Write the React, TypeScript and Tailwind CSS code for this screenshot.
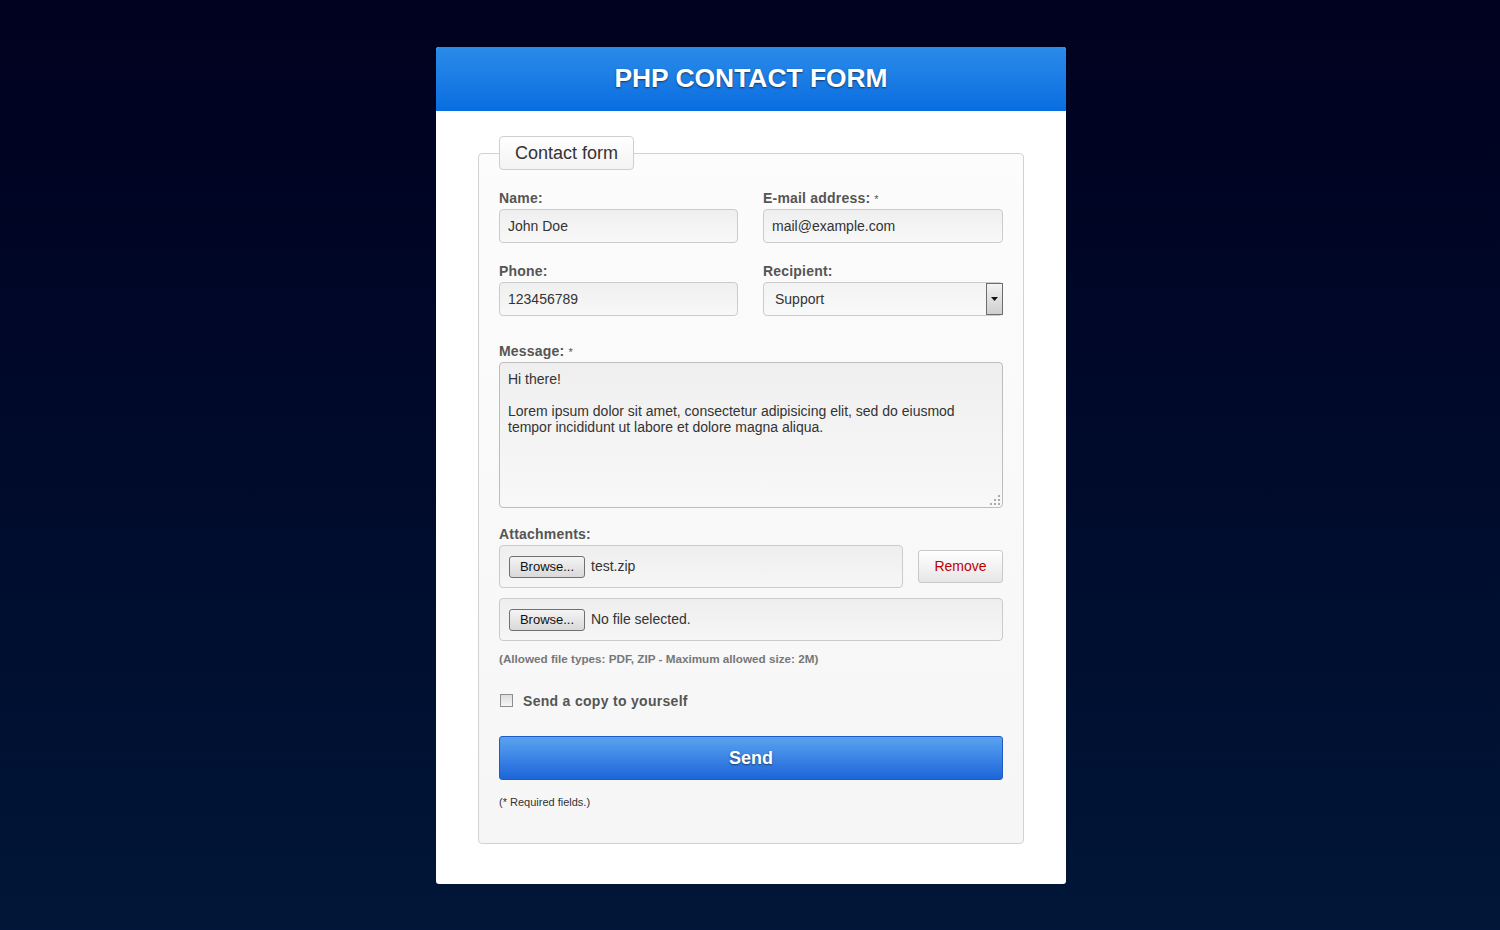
import React from "react";

const font = { fontFamily: '"Liberation Sans", Arial, sans-serif' };

function Label({ children, required }: { children: React.ReactNode; required?: boolean }) {
  return (
    <label className="mb-[3px] block h-4 text-[14px] leading-4 font-bold tracking-[0.2px] text-[#555]">
      {children}
      {required && <span className="ml-1 text-[11px] font-normal text-[#555]">*</span>}
    </label>
  );
}

function TextField({ value }: { value: string }) {
  return (
    <input
      readOnly
      defaultValue={value}
      className="block h-[34px] w-full rounded-[4px] border border-[#cbcbcb] bg-linear-to-b from-[#efefef] to-[#f8f8f8] px-2 text-[14px] text-[#333] outline-none"
    />
  );
}

function BrowseButton() {
  return (
    <button
      type="button"
      className="h-[22px] w-[76px] shrink-0 rounded-[3px] border border-[#707070] bg-linear-to-b from-[#f4f4f4] to-[#d9d9d9] text-[13px] leading-none text-[#111]"
    >
      Browse...
    </button>
  );
}

function FileRow({ name }: { name: string }) {
  return (
    <div className="flex h-[43px] flex-1 items-center gap-[6px] rounded-[4px] border border-[#cbcbcb] bg-linear-to-b from-[#eeeeee] to-[#f6f6f6] pl-[9px]">
      <BrowseButton />
      <span className="text-[14px] text-[#333]">{name}</span>
    </div>
  );
}

export default function App() {
  return (
    <div style={font} className="min-h-screen bg-linear-to-b from-[#00021f] to-[#011638] pt-[47px] pb-[46px] pl-[2px]">
      <div className="mx-auto w-[630px] overflow-hidden rounded-[3px] bg-white">
        <div className="flex h-16 items-center justify-center bg-linear-to-b from-[#2b8be9] to-[#076de0]">
          <h1 className="text-[26.4px] font-bold text-white [text-shadow:0_1px_2px_rgba(0,0,0,0.55)]">
            PHP CONTACT FORM
          </h1>
        </div>

        <div className="px-[42px] pt-[25px] pb-10">
          <fieldset className="rounded-[4px] border border-[#d2d2d2] bg-linear-to-b from-[#fcfcfc] to-[#f6f6f6] px-5 pt-5 pb-[34px]">
            <legend className="h-[34px] rounded-[4px] border border-[#cfcfcf] bg-linear-to-b from-white to-[#f3f3f3] px-[15px] text-[18px] leading-[32px] text-[#333]">
              Contact form
            </legend>

            <div className="grid grid-cols-[239px_240px] gap-x-[25px]">
              <div>
                <Label>Name:</Label>
                <TextField value="John Doe" />
              </div>
              <div>
                <Label required>E-mail address:</Label>
                <TextField value="mail@example.com" />
              </div>
              <div className="mt-5">
                <Label>Phone:</Label>
                <TextField value="123456789" />
              </div>
              <div className="mt-5">
                <Label>Recipient:</Label>
                <div className="relative h-[34px] rounded-[4px] border border-[#cbcbcb] bg-linear-to-b from-[#f3f3f3] to-[#f9f9f9]">
                  <select
                    defaultValue="Support"
                    className="h-full w-full appearance-none bg-transparent pl-[11px] text-[14px] text-[#333] outline-none"
                  >
                    <option>Support</option>
                    <option>Sales</option>
                  </select>
                  <div className="pointer-events-none absolute top-0 -right-px flex h-[32px] w-[17px] items-center justify-center border border-[#6d6d6d] bg-linear-to-b from-[#f2f2f2] to-[#cfcfcf]">
                    <svg width="7" height="4" viewBox="0 0 7 4">
                      <path d="M0 0h7L3.5 4z" fill="#111" />
                    </svg>
                  </div>
                </div>
              </div>
            </div>

            <div className="mt-[27px]">
              <Label required>Message:</Label>
              <div className="relative">
                <textarea
                  readOnly
                  defaultValue={
                    "Hi there!\n\nLorem ipsum dolor sit amet, consectetur adipisicing elit, sed do eiusmod tempor incididunt ut labore et dolore magna aliqua."
                  }
                  className="block h-[146px] w-full resize-none rounded-[4px] border border-[#bdbdbd] bg-linear-to-b from-[#efefef] to-[#f8f8f8] px-2 py-[8px] text-[14px] leading-4 text-[#333] outline-none"
                />
                <svg className="absolute right-[3px] bottom-[3px]" width="10" height="10" viewBox="0 0 10 10">
                  <g fill="#aaa">
                    <rect x="8" y="0" width="2" height="2" />
                    <rect x="4" y="4" width="2" height="2" />
                    <rect x="8" y="4" width="2" height="2" />
                    <rect x="0" y="8" width="2" height="2" />
                    <rect x="4" y="8" width="2" height="2" />
                    <rect x="8" y="8" width="2" height="2" />
                  </g>
                </svg>
              </div>
            </div>

            <div className="mt-[18px]">
              <Label>Attachments:</Label>
              <div className="flex items-center gap-[15px]">
                <FileRow name="test.zip" />
                <button
                  type="button"
                  className="h-[33px] w-[85px] shrink-0 rounded-[3px] border border-[#c8c8c8] bg-linear-to-b from-white to-[#e6e6e6] text-[14px] text-[#c00000]"
                >
                  Remove
                </button>
              </div>
              <div className="mt-[10px] flex">
                <FileRow name="No file selected." />
              </div>
            </div>

            <p className="mt-[11px] text-[11.7px] leading-[14px] font-bold text-[#777]">
              (Allowed file types: PDF, ZIP - Maximum allowed size: 2M)
            </p>

            <label className="mt-[26px] flex h-[18px] items-center gap-[10px]">
              <input
                type="checkbox"
                className="ml-px h-[13px] w-[13px] -translate-y-[1px] appearance-none border border-[#8e8e8e] bg-linear-to-b from-[#dcdcdc] to-[#f6f6f6]"
              />
              <span className="text-[14px] font-bold tracking-[0.3px] text-[#555]">Send a copy to yourself</span>
            </label>

            <button
              type="button"
              className="mt-[26px] block h-[44px] w-full rounded-[3px] border border-[#1c5cc4] bg-linear-to-b from-[#5aa2ef] to-[#1d65d9] text-[18px] font-bold text-white [text-shadow:0_1px_2px_rgba(0,0,0,0.5)]"
            >
              Send
            </button>

            <p className="mt-4 text-[11px] leading-[13px] text-[#333]">(* Required fields.)</p>
          </fieldset>
        </div>
      </div>
    </div>
  );
}
